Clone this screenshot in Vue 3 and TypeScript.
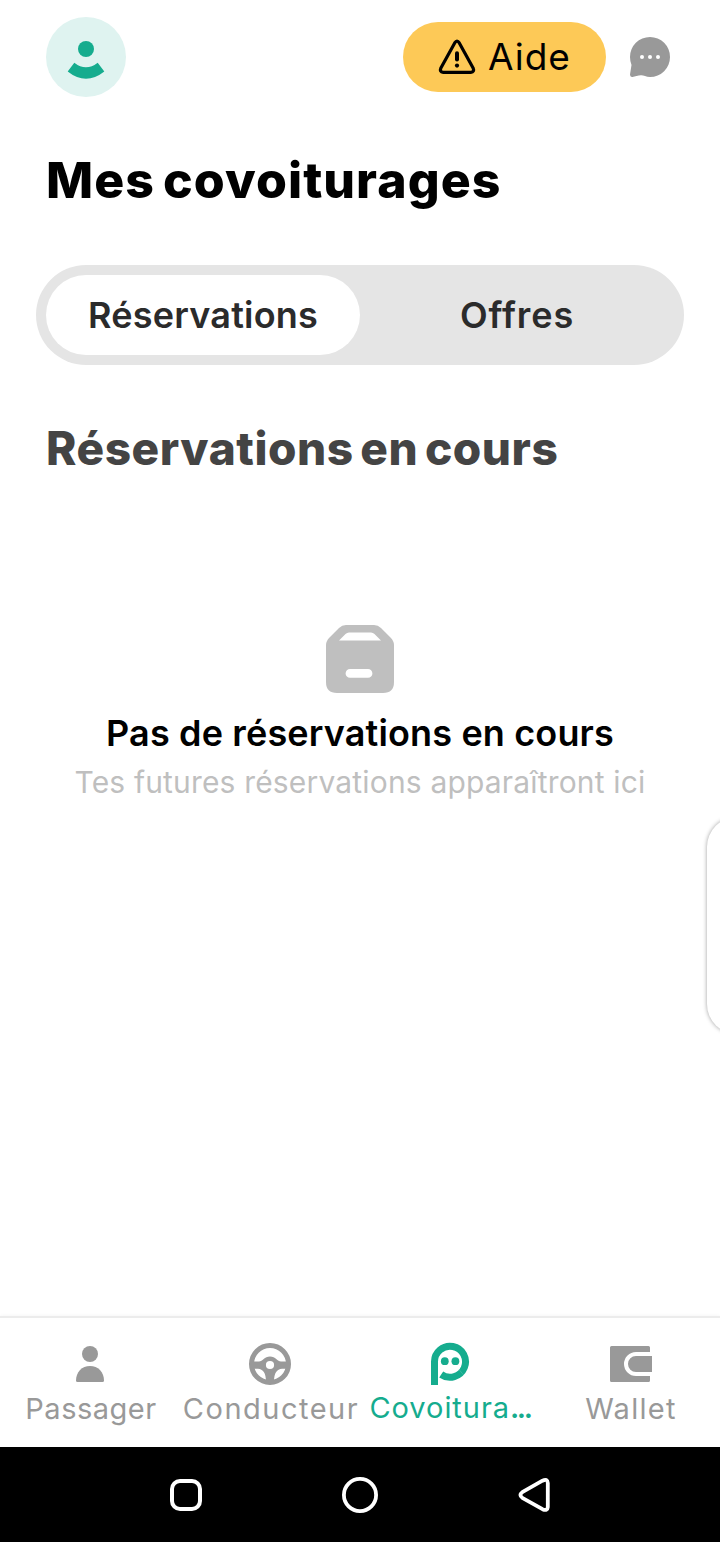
<script setup lang="ts">
import { ref } from 'vue'

const activeTab = ref<'reservations' | 'offers'>('reservations')
const activeNav = ref<string>('rides')
</script>

<template>
  <div class="screen">
    <header class="topbar">
      <button class="avatar" aria-label="Profil">
        <svg width="80" height="80" viewBox="0 0 80 80">
          <circle cx="40" cy="32" r="8" fill="#15ac8e" />
          <path d="M28.300 45.700Q40 55 51.700 45.700L58.300 54.500Q40 69 21.700 54.500Z" fill="#15ac8e" />
        </svg>
      </button>
      <button class="help">
        <svg width="38" height="38" viewBox="0 0 38 38" fill="none">
          <path d="M16.700 4.900Q19 1.300 21.300 4.900L35.100 30Q36.800 34 32.800 34.300H5.200Q1.200 34 2.900 30Z" stroke="#000" stroke-width="3.200" stroke-linejoin="round" />
          <path d="M19 15.200V21.600" stroke="#000" stroke-width="4" stroke-linecap="round" />
          <circle cx="19" cy="27.600" r="2.100" fill="#000" />
        </svg>
        <span>Aide</span>
      </button>
      <button class="chat" aria-label="Messages">
        <svg width="40" height="40" viewBox="0 0 40 40">
          <path d="M20 0A20 20 0 1 1 20 40C16 40 13.500 38.200 11 38.300C8 38.500 5 39.500 2.500 40Q0 40.200 0 37.500L1.500 28Q0 24 0 20A20 20 0 0 1 20 0Z" fill="#999" />
          <circle cx="12" cy="20" r="2" fill="#fff" />
          <circle cx="20" cy="20" r="2" fill="#fff" />
          <circle cx="28" cy="20" r="2" fill="#fff" />
        </svg>
      </button>
    </header>

    <h1 class="title">Mes covoiturages</h1>

    <div class="segmented">
      <button class="segment" :class="{ selected: activeTab === 'reservations' }" @click="activeTab = 'reservations'">Réservations</button>
      <button class="segment offers" :class="{ selected: activeTab === 'offers' }" @click="activeTab = 'offers'">Offres</button>
    </div>

    <h2 class="subtitle">Réservations en cours</h2>

    <section class="empty">
      <svg width="68" height="68" viewBox="0 0 68 68">
        <path fill-rule="evenodd" fill="#bfbfbf" d="M20 0H48Q52 0 55 3L64.500 12.500Q68 16 68 20V57Q68 68 57 68H11Q0 68 0 57V20Q0 16 3.500 12.500L13 3Q16 0 20 0ZM13 15.500H55L48.500 9Q47 7.500 45 7.500H23Q21 7.500 19.500 9ZM24 44A4.400 4.400 0 0 0 24 52.800H42A4.400 4.400 0 0 0 42 44Z" />
      </svg>
      <p class="empty-title">Pas de réservations en cours</p>
      <p class="empty-text">Tes futures réservations apparaîtront ici</p>
    </section>

    <aside class="edge-handle"></aside>

    <nav class="tabs">
      <button class="tab passenger" :class="{ current: activeNav === 'passenger' }" @click="activeNav = 'passenger'">
        <svg width="44" height="44" viewBox="0 0 44 44" fill="currentColor">
          <circle cx="22" cy="12" r="8" />
          <path d="M8 38.500C8 30 14 24 22 24S36 30 36 38.500Q36 40 34.500 40H9.500Q8 40 8 38.500Z" />
        </svg>
        <span>Passager</span>
      </button>
      <button class="tab driver" :class="{ current: activeNav === 'driver' }" @click="activeNav = 'driver'">
        <svg width="44" height="44" viewBox="0 0 44 44">
          <circle cx="22" cy="22" r="18.500" fill="none" stroke="currentColor" stroke-width="5" />
          <path fill="currentColor" fill-rule="evenodd" d="M4 19.500H11C14.500 19.500 16.500 14.500 22 14.500S29.500 19.500 33 19.500H40V26.800H34C29 27 26 31 26 40H18C18 31 15 27 10 26.800H4ZM22 18.900A4.100 4.100 0 1 0 22 27.100A4.100 4.100 0 1 0 22 18.900Z" />
        </svg>
        <span>Conducteur</span>
      </button>
      <button class="tab rides" :class="{ current: activeNav === 'rides' }" @click="activeNav = 'rides'">
        <svg width="44" height="44" viewBox="0 0 44 44">
          <path d="M6.500 43V20A15.500 15.500 0 1 1 13.200 32.500" fill="none" stroke="currentColor" stroke-width="7" />
          <circle cx="16.800" cy="19.200" r="3.900" fill="currentColor" />
          <circle cx="27.400" cy="19.200" r="3.900" fill="currentColor" />
          <path d="M31.200 27.800L35.500 32.800" stroke="#5cc5b0" stroke-width=".5" />
        </svg>
        <span>Covoitura<span class="dots">...</span></span>
      </button>
      <button class="tab wallet" :class="{ current: activeNav === 'wallet' }" @click="activeNav = 'wallet'">
        <svg width="44" height="44" viewBox="0 0 44 44">
          <path fill="currentColor" d="M3.500 4H40.500Q42 4 42 5.500V10H28A12 12 0 0 0 28 34H42V38.500Q42 40 40.500 40H3.500Q2 40 2 38.500V5.500Q2 4 3.500 4ZM28 14H44V30H28A8 8 0 0 1 28 14Z" />
        </svg>
        <span>Wallet</span>
      </button>
    </nav>

    <footer class="system">
      <svg width="40" height="40" viewBox="0 0 40 40" fill="none" stroke="#fff" stroke-width="4">
        <rect x="6" y="6" width="28" height="28" rx="8" />
      </svg>
      <svg width="40" height="40" viewBox="0 0 40 40" fill="none" stroke="#fff" stroke-width="3.800">
        <circle cx="20" cy="20" r="16.100" />
      </svg>
      <svg width="40" height="40" viewBox="0 0 40 40" fill="none" stroke="#fff" stroke-width="3.800" stroke-linejoin="round">
        <path d="M28.500 5.700Q33.500 3.200 33.800 8V32Q33.500 36.500 28.500 34.200L8.300 22.800Q4.500 20 8.300 17.200Z" />
      </svg>
    </footer>
  </div>
</template>

<style>
body {
  margin: 0;
  background: #fff;
}
</style>

<style scoped>
.screen {
  position: relative;
  display: flex;
  flex-direction: column;
  width: 720px;
  height: 1542px;
  overflow: hidden;
  background: #fff;
  font-family: Inter, "Liberation Sans", sans-serif;
  white-space: nowrap;
}

button {
  border: 0;
  padding: 0;
  margin: 0;
  background: none;
  color: inherit;
  font: inherit;
}

svg {
  display: block;
  flex: none;
}

.topbar {
  display: flex;
  align-items: center;
  height: 80px;
  padding: 17px 50px 0 46px;
}

.avatar {
  width: 80px;
  height: 80px;
  border-radius: 50%;
  background: #dff3f0;
}

.help {
  display: flex;
  align-items: center;
  gap: 12px;
  box-sizing: border-box;
  width: 203px;
  height: 70px;
  margin-left: auto;
  padding-left: 35px;
  border-radius: 35px;
  background: #fdc957;
  color: #000;
  font-size: 37px;
  letter-spacing: 1px;
}

.help span {
  padding-bottom: 1px;
}

.chat {
  margin-left: 24px;
}

.title {
  margin: 50px 0 0 46px;
  font-size: 50px;
  line-height: 66px;
  font-weight: 800;
  letter-spacing: 1.05px;
  word-spacing: -4px;
  color: #000;
}

.segmented {
  display: flex;
  box-sizing: border-box;
  height: 100px;
  margin: 52px 36px 0;
  padding: 10px;
  border-radius: 50px;
  background: #e5e5e5;
}

.segment {
  flex: 1;
  border-radius: 40px;
  font-size: 36px;
  font-weight: 600;
  letter-spacing: 0.2px;
  color: #2b2b2b;
}

.offers {
  letter-spacing: 0.9px;
}

.selected {
  background: #fff;
}

.subtitle {
  margin: 53px 0 0 46px;
  font-size: 46px;
  line-height: 60px;
  font-weight: 800;
  letter-spacing: 0.55px;
  word-spacing: -4px;
  color: #444;
}

.empty {
  display: flex;
  flex-direction: column;
  align-items: center;
  margin-top: 147px;
}

.empty p {
  margin: 0;
}

.empty-title {
  padding-top: 16px;
  font-size: 36px;
  line-height: 48px;
  font-weight: 600;
  letter-spacing: 0.15px;
  color: #000;
}

.empty-text {
  padding-top: 1px;
  font-size: 30px;
  line-height: 48px;
  letter-spacing: 0.17px;
  color: #bfbfbf;
}

.edge-handle {
  position: absolute;
  top: 817px;
  left: 707px;
  width: 80px;
  height: 217px;
  border-radius: 30px;
  background: #fff;
  box-shadow: 0 0 4px rgba(0, 0, 0, 0.38);
}

.tabs {
  display: grid;
  grid-template-columns: repeat(4, 180px);
  box-sizing: border-box;
  height: 131px;
  margin-top: auto;
  border-top: 2px solid #ececec;
  box-shadow: 0 -1px 3px rgba(0, 0, 0, 0.03);
}

.tab {
  display: flex;
  flex-direction: column;
  align-items: center;
  padding-top: 24px;
  font-size: 29px;
  line-height: 46px;
  letter-spacing: 0.5px;
  color: #999;
}

.passenger > span {
  padding-left: 2px;
}

.driver {
  letter-spacing: 1.5px;
}

.driver > span {
  padding-left: 2px;
}

.rides {
  letter-spacing: 0.95px;
  line-height: 44px;
}

.dots {
  font-weight: 600;
  letter-spacing: -2.4px;
}

.wallet {
  letter-spacing: 1.3px;
}

.wallet > span {
  padding-left: 2px;
}

.current {
  color: #15ac8e;
}

.system {
  display: flex;
  align-items: center;
  justify-content: space-between;
  box-sizing: border-box;
  height: 95px;
  padding: 0 166px;
  background: #000;
}
</style>
